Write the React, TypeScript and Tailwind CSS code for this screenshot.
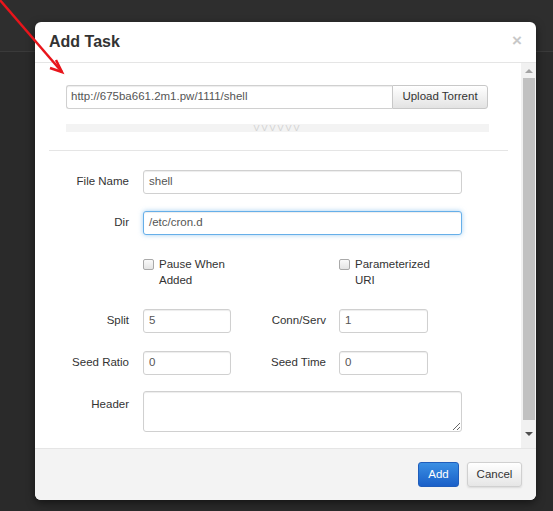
import React from "react";

const font = { fontFamily: '"Liberation Sans", Arial, sans-serif' };

function Input({ value, w, focus }: { value: string; w: string; focus?: boolean }) {
  return (
    <div
      className={`${w} h-[24px] rounded-[3px] border bg-white flex items-center px-[5px] text-[11.5px] text-[#555] ${
        focus
          ? "border-[#66afe9] shadow-[inset_0_1px_1px_rgba(0,0,0,0.075),0_0_5px_rgba(102,175,233,0.6)]"
          : "border-[#d0d0d0] shadow-[inset_0_1px_1px_rgba(0,0,0,0.075)]"
      }`}
    >
      {value}
    </div>
  );
}

function Check({ lines }: { lines: string[] }) {
  return (
    <div className="flex items-start">
      <span className="mt-[3px] w-[11px] h-[11px] rounded-[2px] border border-[#a9a9a9] bg-gradient-to-b from-[#fafafa] to-[#e4e4e4] shrink-0" />
      <div className="ml-[5px] text-[11.5px] leading-[16px] text-[#333]">
        {lines.map((l) => (
          <div key={l}>{l}</div>
        ))}
      </div>
    </div>
  );
}

export default function App() {
  return (
    <div className="relative w-[553px] h-[511px] bg-[#2a2a2a] overflow-hidden" style={font}>
      <div className="h-[52px] bg-[#2e2e2e] border-b border-[#3a3a3a]" />

      <div className="absolute left-[35px] top-[22px] w-[501px] h-[478px] bg-white rounded-[6px] overflow-hidden shadow-[0_3px_9px_rgba(0,0,0,0.5)] flex flex-col">
        <div className="h-[41px] shrink-0 border-b border-[#e5e5e5] flex items-center justify-between pl-[14px] pr-[14px]">
          <span className="text-[16px] font-bold text-[#333]">Add Task</span>
          <span className="text-[17px] font-bold text-[#c8c8c8] leading-none -mt-[4px]">×</span>
        </div>

        <div className="h-[385px] shrink-0 flex">
          <div className="flex-1 pt-[22px]">
            <div className="ml-[31px] mr-[33px] flex h-[24px]">
              <div className="flex-1 h-[24px] rounded-l-[3px] border border-[#d0d0d0] border-r-0 flex items-center px-[4px] text-[11.5px] text-[#555] shadow-[inset_0_1px_1px_rgba(0,0,0,0.075)]">
                http://675ba661.2m1.pw/1111/shell
              </div>
              <div className="w-[96px] h-[24px] rounded-r-[3px] border border-[#c8c8c8] bg-gradient-to-b from-[#ffffff] to-[#e3e3e3] flex items-center justify-center text-[11.5px] text-[#333]">
                Upload Torrent
              </div>
            </div>

            <div className="mt-[15px] ml-[31px] mr-[32px] h-[8px] bg-[#f3f3f3] flex items-center justify-center overflow-hidden">
              <span className="text-[9px] leading-none tracking-[2px] text-[#d2d2d2]">VVVVVV</span>
            </div>

            <div className="mt-[18px] ml-[14px] mr-[13px] border-t border-[#e5e5e5]" />

            <div className="pl-[14px] pt-[19px]">
              <div className="flex items-center">
                <div className="w-[80px] text-right text-[11.5px] text-[#333]">File Name</div>
                <div className="ml-[14px]">
                  <Input value="shell" w="w-[319px]" />
                </div>
              </div>

              <div className="flex items-center mt-[17px]">
                <div className="w-[80px] text-right text-[11.5px] text-[#333]">Dir</div>
                <div className="ml-[14px]">
                  <Input value="/etc/cron.d" w="w-[319px]" focus />
                </div>
              </div>

              <div className="flex mt-[21px]">
                <div className="w-[80px]" />
                <div className="ml-[14px] w-[196px]">
                  <Check lines={["Pause When", "Added"]} />
                </div>
                <div>
                  <Check lines={["Parameterized", "URI"]} />
                </div>
              </div>

              <div className="flex items-center mt-[21px]">
                <div className="w-[80px] text-right text-[11.5px] text-[#333]">Split</div>
                <div className="ml-[14px]">
                  <Input value="5" w="w-[88px]" />
                </div>
                <div className="w-[95px] text-right text-[11.5px] text-[#333]">Conn/Serv</div>
                <div className="ml-[13px]">
                  <Input value="1" w="w-[89px]" />
                </div>
              </div>

              <div className="flex items-center mt-[18px]">
                <div className="w-[80px] text-right text-[11.5px] text-[#333]">Seed Ratio</div>
                <div className="ml-[14px]">
                  <Input value="0" w="w-[88px]" />
                </div>
                <div className="w-[95px] text-right text-[11.5px] text-[#333]">Seed Time</div>
                <div className="ml-[13px]">
                  <Input value="0" w="w-[89px]" />
                </div>
              </div>

              <div className="flex items-start mt-[16px]">
                <div className="w-[80px] text-right text-[11.5px] text-[#333] pt-[5px]">Header</div>
                <textarea
                  readOnly
                  className="ml-[14px] w-[319px] h-[41px] rounded-[3px] border border-[#d0d0d0] shadow-[inset_0_1px_1px_rgba(0,0,0,0.075)] outline-none"
                />
              </div>
            </div>
          </div>

          <div className="w-[15px] shrink-0 bg-[#f1f1f1] flex flex-col items-center">
            <div className="h-[15px] w-full flex items-center justify-center">
              <div className="w-0 h-0 border-l-[4px] border-r-[4px] border-b-[4px] border-l-transparent border-r-transparent border-b-[#a3a3a3]" />
            </div>
            <div className="w-[12px] h-[342px] bg-[#c1c1c1]" />
            <div className="flex-1 w-full flex items-center justify-center">
              <div className="w-0 h-0 border-l-[4px] border-r-[4px] border-t-[4px] border-l-transparent border-r-transparent border-t-[#505050]" />
            </div>
          </div>
        </div>

        <div className="flex-1 border-t border-[#e5e5e5] bg-[#f3f3f3] flex justify-end items-start pt-[13px] pr-[14px] gap-[8px]">
          <div className="w-[41px] h-[25px] rounded-[3px] border border-[#1f5dbb] bg-gradient-to-b from-[#3b8fe3] to-[#1a5fc8] flex items-center justify-center text-[11.5px] text-white">
            Add
          </div>
          <div className="w-[55px] h-[25px] rounded-[3px] border border-[#d0d0d0] bg-gradient-to-b from-[#ffffff] to-[#e6e6e6] shadow-[0_1px_2px_rgba(0,0,0,0.1)] flex items-center justify-center text-[11.5px] text-[#333]">
            Cancel
          </div>
        </div>
      </div>

      <svg className="absolute left-0 top-0" width="80" height="80" viewBox="0 0 80 80">
        <line x1="-1" y1="-1" x2="62" y2="72" stroke="#e8151b" strokeWidth="2.5" />
        <polyline points="50,68 62,72 56,60" fill="none" stroke="#e8151b" strokeWidth="2.5" strokeLinejoin="miter" />
      </svg>
    </div>
  );
}
